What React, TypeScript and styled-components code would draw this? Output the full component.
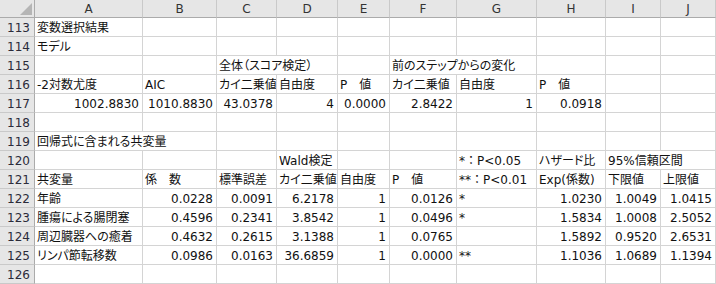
import React from 'react';
import styled, { createGlobalStyle } from 'styled-components';

const Global = createGlobalStyle`
  html, body { margin: 0; padding: 0; background: #ffffff; }
  body { font-family: "DejaVu Sans", "Noto Sans CJK JP", sans-serif; }
`;

const COL_WIDTHS = [108, 74, 60, 61, 52, 67, 80, 69];
const LETTERS = ['A', 'B', 'C', 'D', 'E', 'F', 'G', 'H', 'I', 'J'];

const Sheet = styled.div`
  display: grid;
  grid-template-columns: 35px ${COL_WIDTHS.map((w) => `${w}px`).join(' ')} 55px 1fr;
  grid-template-rows: 18px repeat(14, 19px);
  width: 716px;
  height: 284px;
  overflow: hidden;
  background: #ffffff;
  font-family: "DejaVu Sans", "Noto Sans CJK JP", sans-serif;
`;

const Corner = styled.div`
  box-sizing: border-box;
  background: #e6e6e6;
  border-right: 1px solid #ababab;
  border-bottom: 1px solid #ababab;
  display: flex;
  justify-content: flex-end;
  align-items: flex-end;
  padding: 0 2px 2px 0;
`;

const ColHead = styled.div`
  box-sizing: border-box;
  background: #e6e6e6;
  border-right: 1px solid #c9c9c9;
  border-bottom: 1px solid #ababab;
  display: flex;
  align-items: center;
  justify-content: center;
  font-size: 12px;
  color: #333;
  font-family: "DejaVu Sans", sans-serif;
`;

const RowHead = styled.div`
  box-sizing: border-box;
  background: #e6e6e6;
  border-right: 1px solid #ababab;
  border-bottom: 1px solid #c9c9c9;
  display: flex;
  align-items: flex-end;
  justify-content: flex-end;
  padding: 0 4px 0 0;
  font-size: 12px;
  line-height: 16px;
  color: #2b2b3a;
  font-family: "DejaVu Sans", sans-serif;
`;

const Cell = styled.div<{ $align: 'left' | 'right'; $span: number; $prop: boolean }>`
  box-sizing: border-box;
  grid-column: span ${(p) => p.$span};
  border-right: 1px solid #d4d4d4;
  border-bottom: 1px solid #d4d4d4;
  display: flex;
  align-items: flex-end;
  justify-content: ${(p) => (p.$align === 'right' ? 'flex-end' : 'flex-start')};
  padding: 0 3px 0 2px;
  white-space: nowrap;
  overflow: hidden;
  font-size: 12px;
  line-height: 16px;
  color: #111;
  font-feature-settings: ${(p) => (p.$prop ? '"palt"' : 'normal')};
`;

type CellDef = string | { t: string; span: number } | null;

const ROWS: { n: number; cells: CellDef[] }[] = [
  { n: 113, cells: ['変数選択結果', '', '', '', '', '', '', '', '', ''] },
  { n: 114, cells: ['モデル', '', '', '', '', '', '', '', '', ''] },
  { n: 115, cells: ['', '', { t: '全体（スコア検定）', span: 2 }, null, '', { t: '前のステップからの変化', span: 2 }, null, '', '', ''] },
  { n: 116, cells: ['-2対数尤度', 'AIC', 'カイ二乗値', '自由度', 'P　値', 'カイ二乗値', '自由度', 'P　値', '', ''] },
  { n: 117, cells: ['1002.8830', '1010.8830', '43.0378', '4', '0.0000', '2.8422', '1', '0.0918', '', ''] },
  { n: 118, cells: ['', '', '', '', '', '', '', '', '', ''] },
  { n: 119, cells: [{ t: '回帰式に含まれる共変量', span: 2 }, null, '', '', '', '', '', '', '', ''] },
  { n: 120, cells: ['', '', '', 'Wald検定', '', '', '*：P<0.05', 'ハザード比', { t: '95%信頼区間', span: 2 }, null] },
  { n: 121, cells: ['共変量', '係　数', '標準誤差', 'カイ二乗値', '自由度', 'P　値', '**：P<0.01', 'Exp(係数)', '下限値', '上限値'] },
  { n: 122, cells: ['年齢', '0.0228', '0.0091', '6.2178', '1', '0.0126', '*', '1.0230', '1.0049', '1.0415'] },
  { n: 123, cells: ['腫瘍による腸閉塞', '0.4596', '0.2341', '3.8542', '1', '0.0496', '*', '1.5834', '1.0008', '2.5052'] },
  { n: 124, cells: ['周辺臓器への癒着', '0.4632', '0.2615', '3.1388', '1', '0.0765', '', '1.5892', '0.9520', '2.6531'] },
  { n: 125, cells: ['リンパ節転移数', '0.0986', '0.0163', '36.6859', '1', '0.0000', '**', '1.1036', '1.0689', '1.1394'] },
  { n: 126, cells: ['', '', '', '', '', '', '', '', '', ''] },
];

const isNumber = (s: string) => /^-?\d+(\.\d+)?$/.test(s);
const hasFullColon = (s: string) => s.includes('：') || s.includes('　');

const CornerMark = () => (
  <svg width="12" height="12" viewBox="0 0 12 12">
    <polygon points="12,0 12,12 0,12" fill="#b5b5b5" />
  </svg>
);

export default function App() {
  return (
    <>
      <Global />
      <Sheet>
        <Corner>
          <CornerMark />
        </Corner>
        {LETTERS.map((l) => (
          <ColHead key={l}>{l}</ColHead>
        ))}
        {ROWS.map((row) => (
          <React.Fragment key={row.n}>
            <RowHead>{row.n}</RowHead>
            {row.cells.map((c, i) => {
              if (c === null) return null;
              const text = typeof c === 'string' ? c : c.t;
              const span = typeof c === 'string' ? 1 : c.span;
              const num = isNumber(text);
              return (
                <Cell
                  key={i}
                  $align={num ? 'right' : 'left'}
                  $span={span}
                  $prop={!num && !hasFullColon(text)}
                >
                  {text}
                </Cell>
              );
            })}
          </React.Fragment>
        ))}
      </Sheet>
    </>
  );
}
